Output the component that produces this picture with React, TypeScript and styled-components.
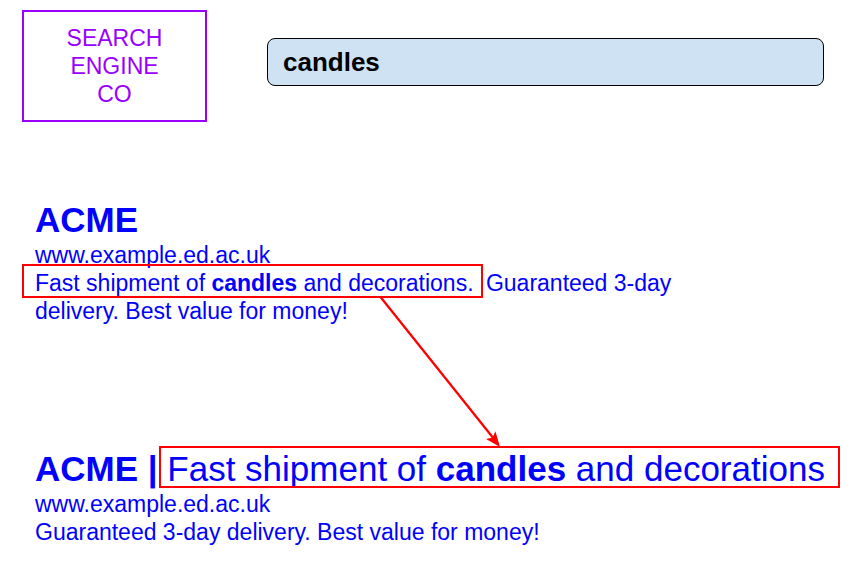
import React from "react";
import styled, { createGlobalStyle } from "styled-components";

const GlobalStyle = createGlobalStyle`
  *, *::before, *::after { box-sizing: border-box; }
  body {
    margin: 0;
    background: #ffffff;
    font-family: "Liberation Sans", Arial, sans-serif;
  }
`;

const Page = styled.div`
  display: flex;
  flex-direction: column;
  gap: 78px;
  padding: 10px 22px 40px;
`;

const Header = styled.header`
  display: flex;
  align-items: center;
  gap: 60px;
  padding-right: 19px;
`;

const Logo = styled.div`
  display: flex;
  flex: 0 0 185px;
  align-items: center;
  justify-content: center;
  padding: 12px 36px;
  border: 2px solid #9900ff;
  color: #9900ff;
  font-size: 23px;
  line-height: 28px;
  text-align: center;
`;

const SearchForm = styled.form`
  display: flex;
  flex: 1;
  min-width: 0;
  padding-bottom: 8px;
`;

const SearchInput = styled.input`
  flex: 1;
  min-width: 0;
  height: 48px;
  margin: 0;
  padding: 0 15px;
  border: 1px solid #000000;
  border-radius: 8px;
  background: #cfe2f3;
  color: #000000;
  font: bold 26px "Liberation Sans", Arial, sans-serif;
  outline: none;
`;

const Results = styled.main`
  display: flex;
  flex-direction: column;
  gap: 124px;
  padding-left: 13px;
`;

const Result = styled.article`
  display: flex;
  flex-direction: column;
  align-items: flex-start;
  color: #0000ff;
  font-size: 23px;
  line-height: 28px;
`;

const Title = styled.h2`
  margin: 0 0 2px;
  font-size: 35px;
  line-height: 39px;
  white-space: nowrap;
`;

const ResultLink = styled.a`
  color: inherit;
  text-decoration: none;
`;

const Description = styled.p`
  max-width: 700px;
  margin: 0;
`;

const Highlight = styled.span<{ $inset: string }>`
  position: relative;
  display: inline-block;
  padding-right: 6px;
  font-weight: normal;

  &::after {
    content: "";
    position: absolute;
    inset: ${({ $inset }) => $inset};
    border: 2px solid #ff0000;
    pointer-events: none;
  }
`;

const ArrowDrawing = styled.svg`
  position: absolute;
  top: 100%;
  left: 345px;
  overflow: visible;
  pointer-events: none;
`;

function Arrow() {
  return (
    <ArrowDrawing width="120" height="150" viewBox="0 0 120 150" aria-hidden="true">
      <path d="M0.5 0 L114 142" stroke="#ff0000" strokeWidth="2.3" fill="none" />
      <path d="M120 150 L115.4 134.2 L112.6 140.6 L106 142 Z" fill="#ff0000" />
    </ArrowDrawing>
  );
}

export default function App() {
  return (
    <>
      <GlobalStyle />
      <Page>
        <Header>
          <Logo>SEARCH ENGINE CO</Logo>
          <SearchForm role="search" onSubmit={(event) => event.preventDefault()}>
            <SearchInput type="text" aria-label="Search" defaultValue="candles" />
          </SearchForm>
        </Header>
        <Results>
          <Result>
            <Title>
              <ResultLink href="#acme">ACME</ResultLink>
            </Title>
            <ResultLink href="#acme">www.example.ed.ac.uk</ResultLink>
            <Description>
              <Highlight $inset="-5px -3px -1px -13px">
                Fast shipment of <b>candles</b> and decorations.
                <Arrow />
              </Highlight>{" "}
              Guaranteed 3-day delivery. Best value for money!
            </Description>
          </Result>
          <Result>
            <Title>
              <ResultLink href="#acme-candles">
                ACME |{" "}
                <Highlight $inset="-3px -9px 0 -8px">
                  Fast shipment of <b>candles</b> and decorations
                </Highlight>
              </ResultLink>
            </Title>
            <ResultLink href="#acme-candles">www.example.ed.ac.uk</ResultLink>
            <Description>Guaranteed 3-day delivery. Best value for money!</Description>
          </Result>
        </Results>
      </Page>
    </>
  );
}
